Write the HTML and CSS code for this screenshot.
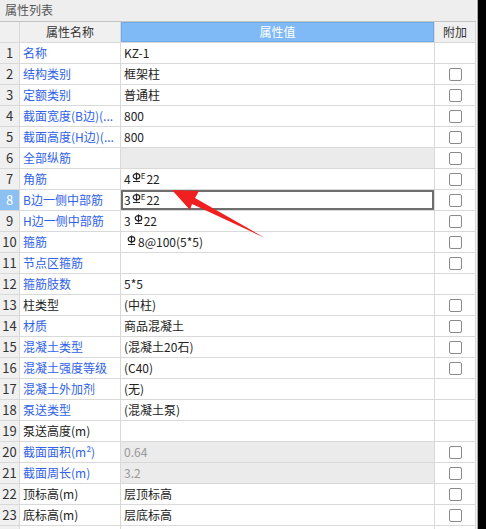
FILE: index.html
```html
<!DOCTYPE html>
<html lang="zh">
<head>
<meta charset="utf-8">
<title>属性列表</title>
<link rel="stylesheet" href="styles.css">
</head>
<body>
<div class="screen">
  <div class="panel">
    <div class="title">属性列表</div>
    <div class="grid">
      <div class="c idx hd"></div>
      <div class="c name hd center">属性名称</div>
      <div class="c val hd blue-hd center">属性值</div>
      <div class="c add hd center">附加</div>

      <div class="c idx">1</div><div class="c name blue">名称</div><div class="c val">KZ-1</div><div class="c add"></div>
      <div class="c idx">2</div><div class="c name blue">结构类别</div><div class="c val">框架柱</div><div class="c add"><span class="cb"></span></div>
      <div class="c idx">3</div><div class="c name blue">定额类别</div><div class="c val">普通柱</div><div class="c add"><span class="cb"></span></div>
      <div class="c idx">4</div><div class="c name blue">截面宽度(B边)(...</div><div class="c val">800</div><div class="c add"><span class="cb"></span></div>
      <div class="c idx">5</div><div class="c name blue">截面高度(H边)(...</div><div class="c val">800</div><div class="c add"><span class="cb"></span></div>
      <div class="c idx">6</div><div class="c name blue">全部纵筋</div><div class="c val grey"></div><div class="c add"><span class="cb"></span></div>
      <div class="c idx">7</div><div class="c name blue">角筋</div><div class="c val">4<svg class="steel" viewBox="0 0 9 10"><path d="M4.5 0.5V8.5M1 9.5H8"/><ellipse cx="4.5" cy="4.2" rx="3.3" ry="2.6"/></svg><span class="sup">E</span>22</div><div class="c add"><span class="cb"></span></div>
      <div class="c idx sel">8</div><div class="c name blue">B边一侧中部筋</div><div class="c val edit">3<svg class="steel" viewBox="0 0 9 10"><path d="M4.5 0.5V8.5M1 9.5H8"/><ellipse cx="4.5" cy="4.2" rx="3.3" ry="2.6"/></svg><span class="sup">E</span>22</div><div class="c add"><span class="cb"></span></div>
      <div class="c idx">9</div><div class="c name blue">H边一侧中部筋</div><div class="c val">3<svg class="steel sp" viewBox="0 0 9 10"><path d="M4.5 0.5V8.5M1 9.5H8"/><ellipse cx="4.5" cy="4.2" rx="3.3" ry="2.6"/></svg>22</div><div class="c add"><span class="cb"></span></div>
      <div class="c idx">10</div><div class="c name blue">箍筋</div><div class="c val"><svg class="steel lead" viewBox="0 0 9 10"><path d="M4.5 0.5V8.5M1 9.5H8"/><ellipse cx="4.5" cy="4.2" rx="3.3" ry="2.6"/></svg>8@100(5*5)</div><div class="c add"><span class="cb"></span></div>
      <div class="c idx">11</div><div class="c name blue">节点区箍筋</div><div class="c val"></div><div class="c add"><span class="cb"></span></div>
      <div class="c idx">12</div><div class="c name blue">箍筋肢数</div><div class="c val">5*5</div><div class="c add"></div>
      <div class="c idx">13</div><div class="c name">柱类型</div><div class="c val">(中柱)</div><div class="c add"><span class="cb"></span></div>
      <div class="c idx">14</div><div class="c name blue">材质</div><div class="c val">商品混凝土</div><div class="c add"><span class="cb"></span></div>
      <div class="c idx">15</div><div class="c name blue">混凝土类型</div><div class="c val">(混凝土20石)</div><div class="c add"><span class="cb"></span></div>
      <div class="c idx">16</div><div class="c name blue">混凝土强度等级</div><div class="c val">(C40)</div><div class="c add"><span class="cb"></span></div>
      <div class="c idx">17</div><div class="c name blue">混凝土外加剂</div><div class="c val">(无)</div><div class="c add"></div>
      <div class="c idx">18</div><div class="c name blue">泵送类型</div><div class="c val">(混凝土泵)</div><div class="c add"></div>
      <div class="c idx">19</div><div class="c name">泵送高度(m)</div><div class="c val"></div><div class="c add"></div>
      <div class="c idx">20</div><div class="c name blue">截面面积(m²)</div><div class="c val grey dim">0.64</div><div class="c add"><span class="cb"></span></div>
      <div class="c idx">21</div><div class="c name blue">截面周长(m)</div><div class="c val grey dim">3.2</div><div class="c add"><span class="cb"></span></div>
      <div class="c idx">22</div><div class="c name">顶标高(m)</div><div class="c val">层顶标高</div><div class="c add"><span class="cb"></span></div>
      <div class="c idx">23</div><div class="c name">底标高(m)</div><div class="c val">层底标高</div><div class="c add"><span class="cb"></span></div>
      <div class="c idx"></div><div class="c name"></div><div class="c val"></div><div class="c add"></div>
    </div>
  </div>
  <div class="edge"></div>
  <div class="dark"></div>
  <svg class="arrow" width="486" height="529" viewBox="0 0 486 529">
    <polygon points="172,190 199,191 195,198 265,238 192,204 190,210"/>
  </svg>
</div>
</body>
</html>
```

FILE: styles.css
```css
html, body {
  margin: 0;
  padding: 0;
  background: #000;
}
.screen {
  position: relative;
  display: flex;
  width: 486px;
  height: 529px;
  overflow: hidden;
  font-family: "Noto Sans CJK SC", "Noto Sans", sans-serif;
  font-size: 12px;
  color: #222;
}
.panel {
  width: 476px;
  background: #fff;
  display: flex;
  flex-direction: column;
}
.edge {
  width: 2px;
  background: #f2f2f2;
  border-right: 1px solid #a8a8a8;
  box-sizing: border-box;
}
.dark {
  flex: 1;
  background: #000;
}
.title {
  height: 22px;
  box-sizing: border-box;
  background: #eeeeee;
  border-bottom: 1px solid #c4c4c4;
  color: #555;
  padding-left: 5px;
  line-height: 20px;
  font-size: 12px;
  flex: none;
}
.grid {
  display: grid;
  grid-template-columns: 20px 101px 314px 41px;
  grid-auto-rows: 21px;
}
.c {
  box-sizing: border-box;
  border-right: 1px solid #d9d9d9;
  border-bottom: 1px solid #d9d9d9;
  line-height: 20px;
  white-space: nowrap;
  overflow: hidden;
}
.idx {
  background: #f0f0f0;
  text-align: center;
  color: #333;
  font-size: 13px;
}
.name {
  padding-left: 3px;
}
.val {
  padding-left: 3px;
}
.hd {
  background: #f0f0f0;
  color: #333;
}
.center {
  text-align: center;
  padding-left: 0;
}
.blue-hd {
  background: #7fbaf6;
  color: #fff;
  box-shadow: inset 0 0 0 1px #6ea9ea;
}
.blue {
  color: #2f62e8;
}
.grey {
  background: #ebebeb;
}
.dim {
  color: #999;
}
.sel {
  background: #8cc0f2;
  color: #fff;
}
.edit {
  box-shadow: inset 0 0 0 2px #6e6e6e;
}
.add {
  display: flex;
  align-items: center;
  justify-content: center;
}
.cb {
  width: 13px;
  height: 13px;
  box-sizing: border-box;
  border: 1px solid #8a8a8a;
  border-radius: 2px;
  background: #fff;
}
.steel {
  width: 9px;
  height: 10px;
  vertical-align: 2px;
  margin-left: 1px;
  fill: none;
  stroke: #222;
  stroke-width: 1.2;
}
.steel.sp {
  margin-left: 3px;
  margin-right: 1px;
}
.steel.lead {
  margin-left: 3px;
  margin-right: 2px;
}
.sup {
  font-size: 8px;
  vertical-align: 5px;
  line-height: 0;
  margin-right: 1px;
}
.arrow {
  position: absolute;
  left: 0;
  top: 0;
  pointer-events: none;
}
.arrow polygon {
  fill: #f02020;
}
```
